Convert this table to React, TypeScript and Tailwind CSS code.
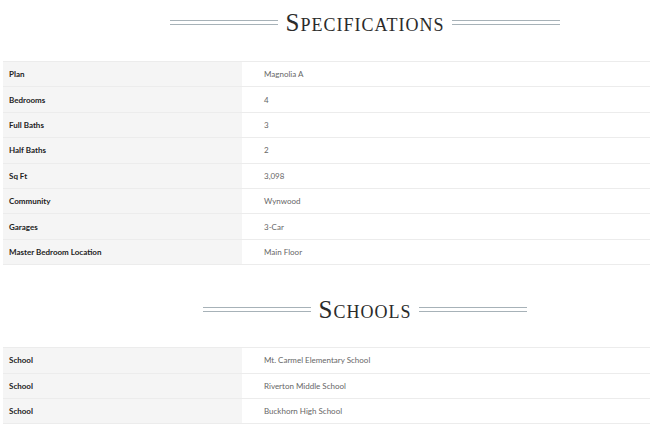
const specs = [
  ["Plan", "Magnolia A"],
  ["Bedrooms", "4"],
  ["Full Baths", "3"],
  ["Half Baths", "2"],
  ["Sq Ft", "3,098"],
  ["Community", "Wynwood"],
  ["Garages", "3-Car"],
  ["Master Bedroom Location", "Main Floor"],
];

const schools = [
  ["School", "Mt. Carmel Elementary School"],
  ["School", "Riverton Middle School"],
  ["School", "Buckhorn High School"],
];

function DoubleLine() {
  return (
    <div className="flex w-[108px] flex-col gap-[3px]">
      <div className="h-px bg-[#a7b2b8]" />
      <div className="h-px bg-[#a7b2b8]" />
    </div>
  );
}

function Heading({ title }: { title: string }) {
  return (
    <div className="flex h-[44px] items-center justify-center gap-2">
      <DoubleLine />
      <h2 className="font-['Liberation_Serif',serif] text-[25px] leading-none tracking-[1px] text-[#2b2b2b] [font-variant:small-caps]">
        {title}
      </h2>
      <DoubleLine />
    </div>
  );
}

function Table({ rows }: { rows: string[][] }) {
  return (
    <div className="border-b border-[#ececec] font-['Lato',sans-serif] text-[8px]">
      {rows.map(([label, value]) => (
        <div key={label + value} className="box-border flex h-[25.4px] border-t border-[#ececec]">
          <div className="flex w-[239px] items-center bg-[#f5f5f5] px-[6px] font-bold text-[#222]">{label}</div>
          <div className="flex flex-1 items-center pl-[22px] text-[#666]">{value}</div>
        </div>
      ))}
    </div>
  );
}

export default function App() {
  return (
    <div className="h-[444px] w-[650px] overflow-hidden bg-white">
      <div className="ml-[3px] w-[724px]">
        <Heading title="Specifications" />
        <div className="mt-[17px]">
          <Table rows={specs} />
        </div>
        <div className="mt-[22px]">
          <Heading title="Schools" />
        </div>
        <div className="mt-[16px]">
          <Table rows={schools} />
        </div>
      </div>
    </div>
  );
}
